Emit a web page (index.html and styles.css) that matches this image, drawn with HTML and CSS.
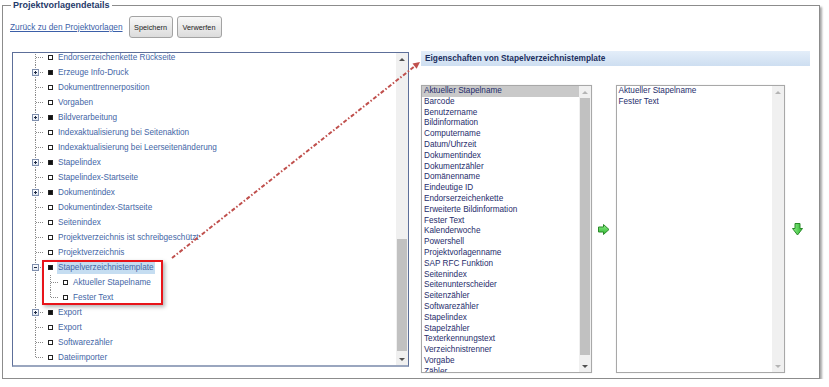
FILE: index.html
```html
<!DOCTYPE html>
<html lang="de">
<head>
    <meta charset="UTF-8">
    <meta name="viewport" content="width=device-width, initial-scale=1.0">
    <title>Projektvorlagendetails</title>
    <link rel="stylesheet" href="styles.css">
</head>
<body>
    <fieldset class="details">
        <legend>Projektvorlagendetails</legend>

        <!-- Kopfzeile mit Link und Buttons -->
        <div class="toolbar">
            <a href="#" class="back-link">Zurück zu den Projektvorlagen</a>
            <button class="btn">Speichern</button>
            <button class="btn">Verwerfen</button>
        </div>

        <div class="main">
            <!-- Baum links -->
            <div class="tree-panel">
                <div class="tree-body">
                    <div class="tree">
                        <div class="node"><span class="twig"></span><span class="sq"></span><span class="label">Endorserzeichenkette Rückseite</span></div>
                        <div class="node branch"><span class="twig"><span class="toggle"></span></span><span class="sq"></span><span class="label">Erzeuge Info-Druck</span></div>
                        <div class="node"><span class="twig"></span><span class="sq"></span><span class="label">Dokumenttrennerposition</span></div>
                        <div class="node"><span class="twig"></span><span class="sq"></span><span class="label">Vorgaben</span></div>
                        <div class="node branch"><span class="twig"><span class="toggle"></span></span><span class="sq"></span><span class="label">Bildverarbeitung</span></div>
                        <div class="node"><span class="twig"></span><span class="sq"></span><span class="label">Indexaktualisierung bei Seitenaktion</span></div>
                        <div class="node"><span class="twig"></span><span class="sq"></span><span class="label">Indexaktualisierung bei Leerseitenänderung</span></div>
                        <div class="node branch"><span class="twig"><span class="toggle"></span></span><span class="sq"></span><span class="label">Stapelindex</span></div>
                        <div class="node"><span class="twig"></span><span class="sq"></span><span class="label">Stapelindex-Startseite</span></div>
                        <div class="node branch"><span class="twig"><span class="toggle"></span></span><span class="sq"></span><span class="label">Dokumentindex</span></div>
                        <div class="node"><span class="twig"></span><span class="sq"></span><span class="label">Dokumentindex-Startseite</span></div>
                        <div class="node"><span class="twig"></span><span class="sq"></span><span class="label">Seitenindex</span></div>
                        <div class="node"><span class="twig"></span><span class="sq"></span><span class="label">Projektverzeichnis ist schreibgeschützt</span></div>
                        <div class="node"><span class="twig"></span><span class="sq"></span><span class="label">Projektverzeichnis</span></div>

                        <!-- markierte Gruppe -->
                        <div class="group">
                            <div class="node branch"><span class="twig"><span class="toggle open"></span></span><span class="sq"></span><span class="label selected">Stapelverzeichnistemplate</span></div>
                            <div class="node child"><span class="twig"></span><span class="sq"></span><span class="label">Aktueller Stapelname</span></div>
                            <div class="node child last-child"><span class="twig"></span><span class="sq"></span><span class="label">Fester Text</span></div>
                        </div>

                        <div class="node branch"><span class="twig"><span class="toggle"></span></span><span class="sq"></span><span class="label">Export</span></div>
                        <div class="node"><span class="twig"></span><span class="sq"></span><span class="label">Export</span></div>
                        <div class="node"><span class="twig"></span><span class="sq"></span><span class="label">Softwarezähler</span></div>
                        <div class="node last"><span class="twig"></span><span class="sq"></span><span class="label">Dateiimporter</span></div>
                    </div>
                </div>
                <div class="sbar">
                    <div class="sb-btn up"></div>
                    <div class="sb-track"><div class="sb-thumb tree-thumb"></div></div>
                    <div class="sb-btn down"></div>
                </div>
            </div>

            <!-- Eigenschaften rechts -->
            <div class="props">
                <div class="props-head">Eigenschaften von Stapelverzeichnistemplate</div>
                <div class="lists">
                    <div class="list list-source">
                        <ul class="items">
                            <li class="selected">Aktueller Stapelname</li>
                            <li>Barcode</li>
                            <li>Benutzername</li>
                            <li>Bildinformation</li>
                            <li>Computername</li>
                            <li>Datum/Uhrzeit</li>
                            <li>Dokumentindex</li>
                            <li>Dokumentzähler</li>
                            <li>Domänenname</li>
                            <li>Eindeutige ID</li>
                            <li>Endorserzeichenkette</li>
                            <li>Erweiterte Bildinformation</li>
                            <li>Fester Text</li>
                            <li>Kalenderwoche</li>
                            <li>Powershell</li>
                            <li>Projektvorlagenname</li>
                            <li>SAP RFC Funktion</li>
                            <li>Seitenindex</li>
                            <li>Seitenunterscheider</li>
                            <li>Seitenzähler</li>
                            <li>Softwarezähler</li>
                            <li>Stapelindex</li>
                            <li>Stapelzähler</li>
                            <li>Texterkennungstext</li>
                            <li>Verzeichnistrenner</li>
                            <li>Vorgabe</li>
                            <li>Zähler</li>
                        </ul>
                        <div class="sbar">
                            <div class="sb-btn up off"></div>
                            <div class="sb-track"><div class="sb-thumb list-thumb"></div></div>
                            <div class="sb-btn down"></div>
                        </div>
                    </div>

                    <div class="mover">
                        <svg width="12" height="11" viewBox="0 0 12 11">
                            <defs>
                                <linearGradient id="gr" x1="0" y1="0" x2="0" y2="1">
                                    <stop offset="0" stop-color="#8ef08a"/>
                                    <stop offset="1" stop-color="#2fb52f"/>
                                </linearGradient>
                            </defs>
                            <path d="M0.5 3 H5.5 V0.5 L11 5.5 L5.5 10.5 V8 H0.5 Z" fill="url(#gr)" stroke="#2a8a2a" stroke-width="1"/>
                        </svg>
                    </div>

                    <div class="list list-target">
                        <ul class="items">
                            <li>Aktueller Stapelname</li>
                            <li>Fester Text</li>
                        </ul>
                        <div class="sbar">
                            <div class="sb-btn up off"></div>
                            <div class="sb-track"></div>
                            <div class="sb-btn down off"></div>
                        </div>
                    </div>

                    <div class="mover mover-down">
                        <svg width="11" height="13" viewBox="0 0 11 13">
                            <defs>
                                <linearGradient id="gd" x1="0" y1="0" x2="1" y2="0">
                                    <stop offset="0" stop-color="#8ef08a"/>
                                    <stop offset="1" stop-color="#2fb52f"/>
                                </linearGradient>
                            </defs>
                            <path d="M3 0.5 H8 V5.5 H10.5 L5.5 12 L0.5 5.5 H3 Z" fill="url(#gd)" stroke="#2a8a2a" stroke-width="1"/>
                        </svg>
                    </div>
                </div>
            </div>
        </div>
    </fieldset>

    <!-- Hinweispfeil -->
    <svg class="pointer" width="829" height="387" viewBox="0 0 829 387">
        <line x1="172" y1="258" x2="415" y2="66" stroke="#c0504d" stroke-width="2" stroke-dasharray="4 2 1.5 2"/>
        <path d="M420 62 L412.5 63.6 L416.6 68.8 Z" fill="#c0504d"/>
    </svg>
</body>
</html>
```

FILE: styles.css
```css
/* Grundlayout */
body {
    margin: 0;
    font-family: "Liberation Sans", Arial, sans-serif;
    background-color: #fff;
}

.details {
    margin: 0 0 0 2px;
    width: 818px;
    min-inline-size: 0;
    box-sizing: border-box;
    padding: 5px 7px 5px 7px;
    border: 1px solid #8c8c8c;
    box-shadow: 2px 2px 2px rgba(0, 0, 0, 0.35);
}

.details legend {
    margin-left: 1px;
    padding: 0 2px;
    font-size: 9px;
    font-weight: bold;
    line-height: 11px;
    color: #1f3a6a;
}

/* Kopfzeile */
.toolbar {
    display: flex;
    align-items: center;
    height: 22px;
}

.back-link {
    font-size: 8.3px;
    color: #3b5fa8;
    text-decoration: underline;
}

.btn {
    width: 44px;
    height: 22px;
    margin-left: 6px;
    padding: 0;
    font-family: "Liberation Sans", Arial, sans-serif;
    font-size: 7.3px;
    color: #222;
    background: linear-gradient(#f8f8f8, #dcdcdc);
    border: 1px solid #a3a3a3;
    border-radius: 3px;
}

.btn + .btn {
    width: 45px;
    margin-left: 4px;
}

.main {
    display: flex;
    align-items: flex-start;
    margin-top: 14px;
}

/* Baum */
.tree-panel {
    display: flex;
    width: 397px;
    height: 315px;
    margin-left: 2px;
    box-sizing: border-box;
    border: 1px solid #5d6f99;
    border-bottom: 2px solid #9aa6bf;
}

.tree-body {
    flex: 1;
    overflow: hidden;
}

.tree {
    margin-top: -3px;
}

.node {
    display: flex;
    align-items: center;
    height: 15px;
}

.twig {
    display: flex;
    align-items: center;
    flex: none;
    width: 31px;
    height: 15px;
    background-image:
        repeating-linear-gradient(to bottom, #8a8a8a 0 1px, transparent 1px 2px),
        repeating-linear-gradient(to right, #8a8a8a 0 1px, transparent 1px 2px);
    background-size: 1px 100%, 8px 1px;
    background-position: 22px 0, 23px 7px;
    background-repeat: no-repeat;
}

.node.last .twig {
    background-size: 1px 8px, 8px 1px;
}

.node.child .twig {
    width: 46px;
    background-image:
        repeating-linear-gradient(to bottom, #8a8a8a 0 1px, transparent 1px 2px),
        repeating-linear-gradient(to bottom, #8a8a8a 0 1px, transparent 1px 2px),
        repeating-linear-gradient(to right, #8a8a8a 0 1px, transparent 1px 2px);
    background-size: 1px 100%, 1px 100%, 8px 1px;
    background-position: 22px 0, 37px 0, 38px 7px;
    background-repeat: no-repeat;
}

.node.last-child .twig {
    background-size: 1px 100%, 1px 8px, 8px 1px;
}

.toggle {
    width: 7px;
    height: 7px;
    margin-left: 19px;
    box-sizing: border-box;
    border: 1px solid #7f8fae;
    background:
        linear-gradient(#1e2a44, #1e2a44) center / 3px 1px no-repeat,
        linear-gradient(#1e2a44, #1e2a44) center / 1px 3px no-repeat,
        linear-gradient(#ffffff, #dfe6f0);
}

.toggle.open {
    background:
        linear-gradient(#1e2a44, #1e2a44) center / 3px 1px no-repeat,
        linear-gradient(#ffffff, #dfe6f0);
}

.sq {
    flex: none;
    width: 5px;
    height: 5px;
    margin-left: 4px;
    box-sizing: border-box;
    border: 1px solid #222;
    background-color: #fff;
}

.branch .sq {
    background-color: #111;
}

.label {
    margin-left: 4px;
    padding: 0 1px;
    font-size: 8.2px;
    line-height: 13px;
    color: #4466a6;
    white-space: nowrap;
}

.label.selected {
    background-color: #c5ddf1;
}

/* rote Markierung */
.group {
    position: relative;
}

.group::after {
    content: "";
    position: absolute;
    top: 0;
    left: 29px;
    width: 121px;
    height: 45px;
    box-sizing: border-box;
    border: 2px solid #e8141a;
    box-shadow: 2px 2px 4px rgba(0, 0, 0, 0.3);
}

/* Scrollbalken */
.sbar {
    display: flex;
    flex-direction: column;
    flex: none;
    width: 12px;
    background-color: #f0f0f0;
}

.sb-btn {
    display: flex;
    align-items: center;
    justify-content: center;
    height: 12px;
}

.sb-btn.up::before {
    content: "";
    border-left: 3px solid transparent;
    border-right: 3px solid transparent;
    border-bottom: 3px solid #505050;
}

.sb-btn.down::before {
    content: "";
    border-left: 3px solid transparent;
    border-right: 3px solid transparent;
    border-top: 3px solid #505050;
}

.sb-btn.off.up::before {
    border-bottom-color: #b4b4b4;
}

.sb-btn.off.down::before {
    border-top-color: #b4b4b4;
}

.sb-track {
    flex: 1;
}

.sb-thumb {
    margin: 0 1px;
    background-color: #c1c1c1;
}

.tree-thumb {
    height: 112px;
    margin-top: 174px;
}

.list-thumb {
    height: 257px;
}

/* Eigenschaften */
.props {
    width: 389px;
    margin-top: -1px;
    margin-left: 12px;
}

.props-head {
    height: 15px;
    padding-left: 4px;
    font-size: 8.3px;
    font-weight: bold;
    line-height: 15px;
    color: #1b2f5e;
    background: linear-gradient(#e4eef9, #cddef1);
}

.lists {
    display: flex;
    align-items: center;
    height: 288px;
    margin-top: 19px;
}

.list {
    display: flex;
    height: 288px;
    box-sizing: border-box;
    border: 1px solid #a8a8a8;
    background-color: #fff;
    box-shadow: 0 0 1px rgba(0, 0, 0, 0.15);
}

.list-source {
    width: 171px;
}

.list-target {
    width: 170px;
}

.items {
    flex: 1;
    margin: 0;
    padding: 0;
    list-style: none;
    overflow: hidden;
    font-size: 8.2px;
    line-height: 10.8px;
    color: #1f2d6b;
}

.items li {
    padding-left: 2px;
    white-space: nowrap;
}

.items .selected {
    background-color: #c9c9c9;
}

.mover {
    display: flex;
    justify-content: center;
    width: 24px;
}

.mover-down {
    width: 25px;
}

/* Hinweispfeil */
.pointer {
    position: absolute;
    top: 0;
    left: 0;
    pointer-events: none;
}
```
